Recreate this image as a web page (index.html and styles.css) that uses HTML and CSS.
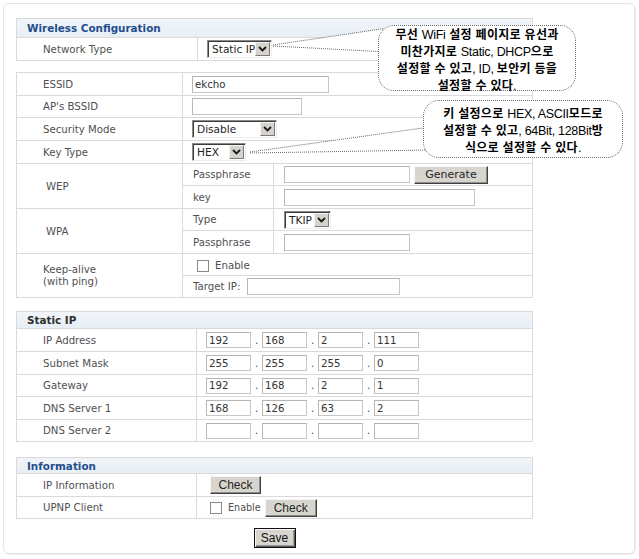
FILE: index.html
```html
<!DOCTYPE html>
<html lang="ko">
<head>
<meta charset="utf-8">
<title>Wireless Configuration</title>
<link rel="stylesheet" href="styles.css">
</head>
<body>
<div class="frame">
  <section class="tbl t1">
    <div class="hdr blue">Wireless Configuration</div>
    <div class="cell lab">Network Type</div>
    <div class="cell val"><span class="sel w65"><span class="opt">Static IP</span><span class="arr"><svg width="9" height="6" viewBox="0 0 9 6"><path d="M1 1 L4.5 4.5 L8 1" fill="none" stroke="#1a1a1a" stroke-width="1.8"/></svg></span></span></div>
  </section>

  <section class="tbl t2">
    <div class="cell lab">ESSID</div>
    <div class="cell val span2"><input class="inp w137" value="ekcho"></div>

    <div class="cell lab">AP's BSSID</div>
    <div class="cell val span2"><input class="inp w110" value=""></div>

    <div class="cell lab">Security Mode</div>
    <div class="cell val span2"><span class="sel w85"><span class="opt">Disable</span><span class="arr"><svg width="9" height="6" viewBox="0 0 9 6"><path d="M1 1 L4.5 4.5 L8 1" fill="none" stroke="#1a1a1a" stroke-width="1.8"/></svg></span></span></div>

    <div class="cell lab">Key Type</div>
    <div class="cell val span2"><span class="sel w54"><span class="opt">HEX</span><span class="arr"><svg width="9" height="6" viewBox="0 0 9 6"><path d="M1 1 L4.5 4.5 L8 1" fill="none" stroke="#1a1a1a" stroke-width="1.8"/></svg></span></span></div>

    <div class="cell lab grp rows2">WEP</div>
    <div class="cell sub">Passphrase</div>
    <div class="cell val"><input class="inp w126" value=""><button class="btn gen">Generate</button></div>
    <div class="cell sub">key</div>
    <div class="cell val"><input class="inp w191" value=""></div>

    <div class="cell lab grp rows2">WPA</div>
    <div class="cell sub">Type</div>
    <div class="cell val"><span class="sel w47"><span class="opt">TKIP</span><span class="arr"><svg width="9" height="6" viewBox="0 0 9 6"><path d="M1 1 L4.5 4.5 L8 1" fill="none" stroke="#1a1a1a" stroke-width="1.8"/></svg></span></span></div>
    <div class="cell sub">Passphrase</div>
    <div class="cell val"><input class="inp w126" value=""></div>

    <div class="cell lab rows2 two">Keep-alive<br>(with ping)</div>
    <div class="cell sub span2 en-row"><span class="chk"></span><span class="chk-l">Enable</span></div>
    <div class="cell sub span2"><span class="tip-l">Target IP:</span><input class="inp w153" value=""></div>
  </section>

  <section class="tbl t3">
    <div class="hdr dark">Static IP</div>
    <div class="cell lab">IP Address</div>
    <div class="cell val ip"><input class="inp oct" value="192"><span class="dot">.</span><input class="inp oct" value="168"><span class="dot">.</span><input class="inp oct" value="2"><span class="dot">.</span><input class="inp oct" value="111"></div>
    <div class="cell lab">Subnet Mask</div>
    <div class="cell val ip"><input class="inp oct" value="255"><span class="dot">.</span><input class="inp oct" value="255"><span class="dot">.</span><input class="inp oct" value="255"><span class="dot">.</span><input class="inp oct" value="0"></div>
    <div class="cell lab">Gateway</div>
    <div class="cell val ip"><input class="inp oct" value="192"><span class="dot">.</span><input class="inp oct" value="168"><span class="dot">.</span><input class="inp oct" value="2"><span class="dot">.</span><input class="inp oct" value="1"></div>
    <div class="cell lab">DNS Server 1</div>
    <div class="cell val ip"><input class="inp oct" value="168"><span class="dot">.</span><input class="inp oct" value="126"><span class="dot">.</span><input class="inp oct" value="63"><span class="dot">.</span><input class="inp oct" value="2"></div>
    <div class="cell lab">DNS Server 2</div>
    <div class="cell val ip"><input class="inp oct" value=""><span class="dot">.</span><input class="inp oct" value=""><span class="dot">.</span><input class="inp oct" value=""><span class="dot">.</span><input class="inp oct" value=""></div>
  </section>

  <section class="tbl t4">
    <div class="hdr blue">Information</div>
    <div class="cell lab">IP Information</div>
    <div class="cell val info"><button class="btn chkbtn">Check</button></div>
    <div class="cell lab">UPNP Client</div>
    <div class="cell val info"><span class="chk"></span><span class="chk-s">Enable</span><button class="btn chkbtn w52">Check</button></div>
  </section>

  <div class="save-row"><button class="btn save">Save</button></div>
</div>

<div class="overlay">
  <svg class="tails" width="639" height="559" viewBox="0 0 639 559">
    <polygon points="273,45 388,28 388,52" fill="#fff"/>
    <line x1="273" y1="45" x2="388" y2="28" stroke="#666" stroke-width="1" stroke-dasharray="1 1"/>
    <line x1="273" y1="46" x2="388" y2="52" stroke="#666" stroke-width="1" stroke-dasharray="1 1"/>
    <polygon points="250,152 430,127 430,150" fill="#fff"/>
    <line x1="250" y1="152" x2="430" y2="127" stroke="#666" stroke-width="1" stroke-dasharray="1 1"/>
    <line x1="250" y1="153" x2="430" y2="150" stroke="#666" stroke-width="1" stroke-dasharray="1 1"/>
  </svg>
  <div class="bubble b1">무선 <span class="en">WiFi</span> 설정 페이지로 유선과<br>미찬가지로 <span class="en">Static, DHCP</span>으로<br>설정할 수 있고<span class="en">, ID, </span>보안키 등을<br>설정할 수 있다<span class="en">.</span></div>
  <div class="bubble b2">키 설정으로 <span class="en">HEX, ASCII</span>모드로<br>설정할 수 있고<span class="en">, 64Bit, 128Bit</span>방<br>식으로 설정할 수 있다<span class="en">.</span></div>
</div>
</body>
</html>
```

FILE: styles.css
```css
* { box-sizing: border-box; }

body {
  margin: 0;
  background: #fff;
  font-family: "DejaVu Sans", Verdana, sans-serif;
  font-size: 10.2px;
  color: #505050;
  position: relative;
  width: 639px;
  height: 559px;
  overflow: hidden;
}

.frame {
  margin: 3px;
  width: 632px;
  height: 551px;
  border: 1px solid #e3e3e3;
  border-radius: 6px;
  box-shadow: 1px 1px 0 #ececec;
  padding: 14px 0 0 12px;
}

.tbl {
  width: 517px;
  display: grid;
  gap: 1px;
  background: #dadada;
  border: 1px solid #dadada;
}

.t1 { grid-template-columns: 180px 1fr; grid-template-rows: 18px 22px; }
.t2 {
  margin-top: 11px;
  grid-template-columns: 165px 90px 1fr;
  grid-template-rows: 22px 21px 22px 22px 21px 22px 21px 22px 21px 21px;
}
.t3 {
  margin-top: 13px;
  grid-template-columns: 179px 1fr;
  grid-template-rows: 16px 22px 22px 21px 22px 21px;
}
.t4 {
  margin-top: 15px;
  grid-template-columns: 179px 1fr;
  grid-template-rows: 15px 22px 21px;
}

.hdr {
  grid-column: 1 / -1;
  background: linear-gradient(#f1f5f9, #e7eef5);
  font-weight: bold;
  font-size: 10.4px;
  padding-left: 10px;
  display: flex;
  align-items: center;
}
.hdr.blue { color: #1f4e8c; }
.hdr.dark { color: #2e2e2e; }

.cell {
  background: #fff;
  display: flex;
  align-items: center;
  min-width: 0;
}
.lab { padding-left: 26px; }
.grp { padding-left: 29px; }
.rows2 { grid-row: span 2; }
.two { line-height: 12px; }
.span2 { grid-column: span 2; }
.val { padding-left: 9px; }
.sub { padding-left: 10px; }
.t2 .sub + .val { padding-left: 10px; }
.en-row { padding-top: 2px; }
.info { padding-left: 13px; }

.inp {
  height: 17px;
  border: 1px solid #c6c6c6;
  border-top-color: #b4b4b4;
  border-left-color: #b8b8b8;
  background: #fff;
  font: 10.2px "DejaVu Sans", Verdana, sans-serif;
  color: #333;
  padding: 0 2px;
  margin: 0;
  outline: none;
}
.w137 { width: 137px; }
.w110 { width: 110px; }
.w126 { width: 126px; }
.w191 { width: 191px; }
.w153 { width: 153px; }

.ip .oct { width: 45px; height: 16px; }
.dot { width: 11px; text-align: center; color: #444; }

.sel {
  display: inline-flex;
  align-items: center;
  height: 18px;
  background: #fff;
  border-top: 1px solid #8a8a8a;
  border-left: 1px solid #8a8a8a;
  border-right: 1px solid #ececec;
  border-bottom: 1px solid #ececec;
  box-shadow: inset 1px 1px 0 #3c3c3c;
  padding: 1px 1px 1px 2px;
  color: #1e1e1e;
  font-size: 10.6px;
}
.sel .opt { flex: 1; padding-left: 2px; white-space: nowrap; overflow: hidden; }
.arr {
  width: 15px;
  height: 14px;
  background: #d6d3cc;
  border: 1px solid;
  border-color: #f4f4f4 #7a7a7a #7a7a7a #f4f4f4;
  display: flex;
  align-items: center;
  justify-content: center;
}
.w65 { width: 65px; }
.w85 { width: 85px; }
.w54 { width: 54px; }
.w47 { width: 47px; }

.btn {
  height: 18px;
  padding: 0;
  background: #d8d5cf;
  border: 1px solid;
  border-color: #f6f6f6 #404040 #404040 #f6f6f6;
  box-shadow: inset -1px -1px 0 #8c8c8c;
  font: 11px "DejaVu Sans", Verdana, sans-serif;
  color: #262626;
}
.gen { width: 74px; margin-left: 4px; }
.chkbtn { width: 51px; font-family: "Liberation Sans", Arial, sans-serif; font-size: 12px; }
.w52 { width: 52px; margin-left: 4px; }

.chk {
  width: 12px;
  height: 12px;
  border: 1px solid #8a8a8a;
  background: #fff;
  display: inline-block;
}
.t2 .chk { margin-left: 4px; }
.chk-l { margin-left: 6px; }
.chk-s { margin-left: 6px; font-size: 9.6px; }
.tip-l { margin-right: 7px; }

.save-row {
  width: 517px;
  display: flex;
  justify-content: center;
  margin-top: 9px;
}
.save {
  width: 42px;
  height: 20px;
  border: 1px solid #111;
  box-shadow: inset 1px 1px 0 #f6f6f6, inset -1px -1px 0 #5a5a5a, inset -2px -2px 0 #9a9a9a;
  font-family: "Liberation Sans", Arial, sans-serif;
  font-size: 12px;
  color: #111;
}

.overlay {
  position: absolute;
  left: 0;
  top: 0;
  width: 639px;
  height: 559px;
  pointer-events: none;
}
.tails { position: absolute; left: 0; top: 0; }

.bubble {
  position: absolute;
  background: #fff;
  border: 1px dotted #6a6a6a;
  border-radius: 16px;
  font-family: "Noto Sans CJK KR", sans-serif;
  font-weight: bold;
  font-size: 12px;
  line-height: 15px;
  color: #000;
  text-align: center;
  letter-spacing: 0.3px;
}
.bubble .en {
  font-family: "Liberation Sans", Arial, sans-serif;
  font-weight: normal;
  font-size: 12.5px;
  letter-spacing: -0.3px;
}
.b1 { left: 378px; top: 25px; width: 198px; height: 66px; padding-top: 0; }
.b2 { left: 423px; top: 100px; width: 200px; height: 58px; padding-top: 4px; }
```
